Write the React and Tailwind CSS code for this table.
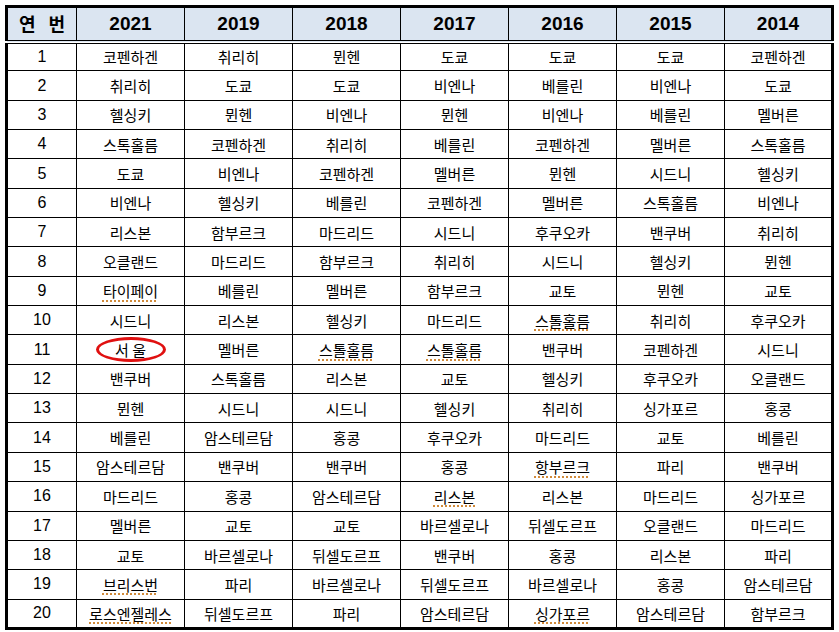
import React from "react";

const years = ["2021", "2019", "2018", "2017", "2016", "2015", "2014"];

// each row: the cities by year, "~" marks a spell-check underline
const rows = [
  ["코펜하겐", "취리히", "뮌헨", "도쿄", "도쿄", "도쿄", "코펜하겐"],
  ["취리히", "도쿄", "도쿄", "비엔나", "베를린", "비엔나", "도쿄"],
  ["헬싱키", "뮌헨", "비엔나", "뮌헨", "비엔나", "베를린", "멜버른"],
  ["스톡홀름", "코펜하겐", "취리히", "베를린", "코펜하겐", "멜버른", "스톡홀름"],
  ["도쿄", "비엔나", "코펜하겐", "멜버른", "뮌헨", "시드니", "헬싱키"],
  ["비엔나", "헬싱키", "베를린", "코펜하겐", "멜버른", "스톡홀름", "비엔나"],
  ["리스본", "함부르크", "마드리드", "시드니", "후쿠오카", "밴쿠버", "취리히"],
  ["오클랜드", "마드리드", "함부르크", "취리히", "시드니", "헬싱키", "뮌헨"],
  ["~타이페이", "베를린", "멜버른", "함부르크", "교토", "뮌헨", "교토"],
  ["시드니", "리스본", "헬싱키", "마드리드", "~스톨홀름", "취리히", "후쿠오카"],
  ["서울", "멜버른", "~스톨홀름", "~스톨홀름", "밴쿠버", "코펜하겐", "시드니"],
  ["밴쿠버", "스톡홀름", "리스본", "교토", "헬싱키", "후쿠오카", "오클랜드"],
  ["뮌헨", "시드니", "시드니", "헬싱키", "취리히", "싱가포르", "홍콩"],
  ["베를린", "암스테르담", "홍콩", "후쿠오카", "마드리드", "교토", "베를린"],
  ["암스테르담", "밴쿠버", "밴쿠버", "홍콩", "~항부르크", "파리", "밴쿠버"],
  ["마드리드", "홍콩", "암스테르담", "~리스본", "리스본", "마드리드", "싱가포르"],
  ["멜버른", "교토", "교토", "바르셀로나", "뒤셀도르프", "오클랜드", "마드리드"],
  ["교토", "바르셀로나", "뒤셀도르프", "밴쿠버", "홍콩", "리스본", "파리"],
  ["~브리스번", "파리", "바르셀로나", "뒤셀도르프", "바르셀로나", "홍콩", "암스테르담"],
  ["~로스엔젤레스", "뒤셀도르프", "파리", "암스테르담", "~싱가포르", "암스테르담", "함부르크"],
];

const Cell = ({ value }) => {
  if (value === "서울") {
    return (
      <span className="relative inline-block">
        <span className="absolute -left-[19px] -right-[20px] -top-[5px] -bottom-[5px] rounded-[50%] border-[3px] border-[#e01010]"></span>
        서&nbsp;울
      </span>
    );
  }
  if (value.startsWith("~")) {
    return (
      <span className="underline decoration-dotted decoration-[#d08a3a] decoration-2 underline-offset-[3px]">
        {value.slice(1)}
      </span>
    );
  }
  return <span>{value}</span>;
};

const App = () => {
  return (
    <div
      className="w-[839px] h-[632px] bg-white pl-[5px] pt-[5px]"
      style={{ fontFamily: '"Noto Sans CJK KR", "Liberation Sans", sans-serif' }}
    >
      <table className="table-fixed border-collapse border-[3px] border-black w-[827px] text-black">
        <colgroup>
          <col className="w-[70px]" />
          {years.map((y) => (
            <col key={y} className="w-[108px]" />
          ))}
        </colgroup>
        <thead>
          <tr className="h-[35px] bg-[#dbe5f1]">
            <th className="border border-black border-b-4 [border-bottom-style:double] px-[11px] font-bold text-[18px]">
              <div className="flex justify-between">
                <span>연</span>
                <span>번</span>
              </div>
            </th>
            {years.map((y) => (
              <th
                key={y}
                className="border border-black border-b-4 [border-bottom-style:double] font-bold text-[19px] [font-family:'Liberation_Sans',sans-serif]"
              >
                {y}
              </th>
            ))}
          </tr>
        </thead>
        <tbody>
          {rows.map((row, i) => (
            <tr key={i} className="h-[29.35px]">
              <td className="border border-black text-center text-[16px] leading-none [font-family:'Liberation_Sans',sans-serif]">
                {i + 1}
              </td>
              {row.map((c, j) => (
                <td key={j} className="border border-black text-center text-[15px] leading-none p-0">
                  <Cell value={c} />
                </td>
              ))}
            </tr>
          ))}
        </tbody>
      </table>
    </div>
  );
};

export default App;
